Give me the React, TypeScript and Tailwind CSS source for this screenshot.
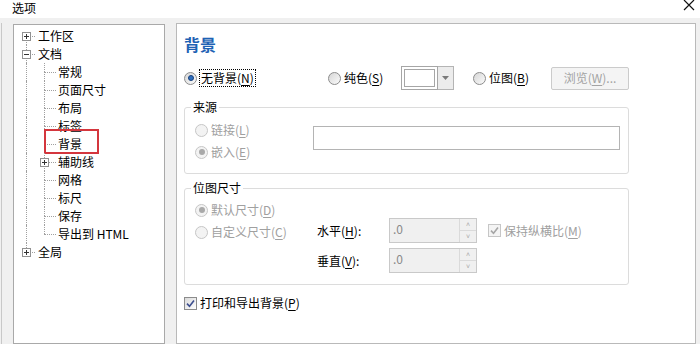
import React from "react";

type Node = {
  label: string;
  level: 0 | 1;
  expander?: "plus" | "minus";
  firstRoot?: boolean;
  lastRoot?: boolean;
  lastChild?: boolean;
  marked?: boolean;
};

const tree: Node[] = [
  { label: "工作区", level: 0, expander: "plus", firstRoot: true },
  { label: "文档", level: 0, expander: "minus" },
  { label: "常规", level: 1 },
  { label: "页面尺寸", level: 1 },
  { label: "布局", level: 1 },
  { label: "标签", level: 1 },
  { label: "背景", level: 1, marked: true },
  { label: "辅助线", level: 1, expander: "plus" },
  { label: "网格", level: 1 },
  { label: "标尺", level: 1 },
  { label: "保存", level: 1 },
  { label: "导出到 HTML", level: 1, lastChild: true },
  { label: "全局", level: 0, expander: "plus", lastRoot: true },
];

function Expander({ kind }: { kind: "plus" | "minus" }) {
  return (
    <span className="absolute left-[5px] top-[5px] flex h-[9px] w-[9px] items-center justify-center border border-[#919191] bg-white">
      <span className="absolute h-px w-[5px] bg-[#333]" />
      {kind === "plus" && <span className="absolute h-[5px] w-px bg-[#333]" />}
    </span>
  );
}

function TreeRow({ node }: { node: Node }) {
  const dots = "border-dotted border-[#a0a0a0]";
  return (
    <div className="relative flex h-[18px] items-center">
      {/* root column */}
      <div className="relative h-[18px] w-[18px] shrink-0">
        {node.level === 0 ? (
          <>
            {!node.firstRoot && <span className={`absolute left-[9px] top-0 h-[9px] border-l ${dots}`} />}
            {!node.lastRoot && <span className={`absolute left-[9px] top-[9px] h-[9px] border-l ${dots}`} />}
            <span className={`absolute left-[9px] top-[9px] w-[9px] border-t ${dots}`} />
            {node.expander && <Expander kind={node.expander} />}
          </>
        ) : (
          <span className={`absolute left-[9px] top-0 h-[18px] border-l ${dots}`} />
        )}
      </div>
      {node.level === 1 && (
        <div className="relative h-[18px] w-[21px] shrink-0">
          <span className={`absolute left-[9px] top-0 h-[9px] border-l ${dots}`} />
          {!node.lastChild && <span className={`absolute left-[9px] top-[9px] h-[9px] border-l ${dots}`} />}
          <span className={`absolute left-[9px] top-[9px] w-[12px] border-t ${dots}`} />
          {node.expander && <Expander kind={node.expander} />}
        </div>
      )}
      <span className={`whitespace-nowrap text-[12px] leading-[18px] text-black ${node.level === 0 ? "ml-[3px]" : "ml-[2px]"}`}>
        {node.label}
      </span>
      {node.marked && (
        <span className="absolute left-[27px] top-[-6px] h-[25px] w-[55px] border-2 border-[#d4363d]" />
      )}
    </div>
  );
}

function Radio({ checked, disabled }: { checked?: boolean; disabled?: boolean }) {
  return (
    <span
      className={`flex h-[13px] w-[13px] shrink-0 items-center justify-center rounded-full border ${
        disabled ? "border-[#c6c6c6] bg-[#f3f3f3]" : "border-[#8c8c8c] bg-gradient-to-br from-[#d6d6d6] to-[#fbfbfb]"
      }`}
    >
      {checked && (
        <span
          className={`h-[6px] w-[6px] rounded-full ${
            disabled ? "bg-[#a9a9a9]" : "border border-[#173f7a] bg-[#2f6fbf]"
          }`}
        />
      )}
    </span>
  );
}

function Check({ disabled }: { disabled?: boolean }) {
  return (
    <span
      className={`flex h-[13px] w-[13px] shrink-0 items-center justify-center border ${
        disabled ? "border-[#c6c6c6] bg-[#f4f4f4]" : "border-[#8c8c8c] bg-gradient-to-br from-[#dadada] to-white"
      }`}
    >
      <svg width="9" height="9" viewBox="0 0 9 9">
        <path
          d="M1 4.6 L3.5 7.2 L8 1.4"
          fill="none"
          stroke={disabled ? "#a6a6a6" : "#3d4f8f"}
          strokeWidth="1.6"
        />
      </svg>
    </span>
  );
}

function Mn({ text, k }: { text: string; k: string }) {
  return (
    <>
      {text}(<span className="underline underline-offset-2">{k}</span>)
    </>
  );
}

function Spin() {
  return (
    <div className="flex h-[25px] w-[88px] border border-[#c9c9c9] bg-[#f0f0f0]">
      <span className="flex-1 pl-[3px] pt-[2px] text-[12px] leading-[16px] text-[#8a8a8a]">.0</span>
      <div className="flex w-[17px] flex-col border-l border-[#dadada]">
        <span className="flex flex-1 items-center justify-center border-b border-[#dadada] text-[7px] leading-none text-[#a8a8a8]">
          ˄
        </span>
        <span className="flex flex-1 items-center justify-center text-[7px] leading-none text-[#a8a8a8]">˅</span>
      </div>
    </div>
  );
}

export default function App() {
  return (
    <div className="flex h-[344px] w-[700px] flex-col overflow-hidden bg-[#f0f0f0] font-['Noto_Sans_CJK_SC',sans-serif] text-[12px] text-black">
      {/* title bar */}
      <div className="flex h-[18px] shrink-0 items-start justify-between bg-white pl-[12px] pr-[5px]">
        <span className="mt-px text-[12px] leading-[14px]">选项</span>
        <svg width="12" height="12" viewBox="0 0 12 12" className="mt-[-1px]">
          <path d="M1 1 L11 11 M11 1 L1 11" stroke="#111" strokeWidth="1.2" />
        </svg>
      </div>

      <div className="flex flex-1 pt-[5px]">
        <div className="ml-px w-[12px] shrink-0 border-l border-[#c8c8c8]" />

        {/* tree */}
        <div className="mt-px w-[152px] shrink-0 border border-[#a9a9a9] bg-white pl-[3px] pt-[2px]">
          {tree.map((n) => (
            <TreeRow key={n.label} node={n} />
          ))}
        </div>

        {/* content panel */}
        <div className="ml-[11px] w-[520px] shrink-0 border border-[#b9b9b9] bg-white pl-[7px] pt-[9px]">
          <div className="text-[16px] font-bold leading-[22px] text-[#1e62b4]">背景</div>

          <div className="mt-[11px] flex h-[24px] items-center">
            <div className="flex w-[144px] items-center">
              <Radio checked />
              <span className="ml-[2px] border border-dotted border-black px-px leading-[16px]">
                <Mn text="无背景" k="N" />
              </span>
            </div>
            <div className="flex w-[73px] items-center">
              <Radio />
              <span className="ml-[3px] leading-[16px]">
                <Mn text="纯色" k="S" />
              </span>
            </div>
            <div className="flex h-[24px] w-[53px]">
              <div className="flex-1 border border-[#a6a6a6] bg-white p-[2px]">
                <div className="h-full w-full border border-[#a6a6a6]" />
              </div>
              <div className="flex w-[16px] items-center justify-center border border-l-0 border-[#b4b4b4] bg-[#ececec]">
                <svg width="7" height="4" viewBox="0 0 7 4">
                  <path d="M0 0 H7 L3.5 4 Z" fill="#7a7a7a" />
                </svg>
              </div>
            </div>
            <div className="ml-[19px] flex w-[78px] items-center">
              <Radio />
              <span className="ml-[3px] leading-[16px]">
                <Mn text="位图" k="B" />
              </span>
            </div>
            <div className="flex h-[23px] w-[78px] items-center justify-center rounded-[2px] border border-[#cbcbcb] bg-[#f4f4f4] text-[#a3a3a3]">
              <Mn text="浏览" k="W" />...
            </div>
          </div>

          <fieldset className="mt-[9px] w-[445px] rounded-[3px] border border-[#dcdcdc] pb-[10px] pl-[10px]">
            <legend className="-ml-[4px] px-[2px] leading-[16px]">来源</legend>
            <div className="flex pt-[4px]">
              <div className="flex w-[118px] flex-col text-[#a0a0a0]">
                <div className="flex h-[22px] items-center gap-[3px]">
                  <Radio disabled />
                  <span>
                    <Mn text="链接" k="L" />
                  </span>
                </div>
                <div className="flex h-[22px] items-center gap-[3px]">
                  <Radio disabled checked />
                  <span>
                    <Mn text="嵌入" k="E" />
                  </span>
                </div>
              </div>
              <div className="mt-[7px] h-[24px] w-[307px] border border-[#b4b4b4] bg-white" />
            </div>
          </fieldset>

          <fieldset className="mt-[6px] w-[445px] rounded-[3px] border border-[#dcdcdc] pb-[11px] pl-[10px]">
            <legend className="-ml-[4px] px-[2px] leading-[16px]">位图尺寸</legend>
            <div className="flex">
              <div className="flex w-[122px] flex-col pt-[3px] text-[#a0a0a0]">
                <div className="flex h-[22px] items-center gap-[3px]">
                  <Radio disabled checked />
                  <span>
                    <Mn text="默认尺寸" k="D" />
                  </span>
                </div>
                <div className="flex h-[22px] items-center gap-[3px]">
                  <Radio disabled />
                  <span>
                    <Mn text="自定义尺寸" k="C" />
                  </span>
                </div>
              </div>
              <div className="flex flex-col gap-[5px] pt-[22px]">
                <div className="flex h-[25px] items-center">
                  <span className="w-[72px]">
                    <Mn text="水平" k="H" />:
                  </span>
                  <Spin />
                  <div className="ml-[11px] flex items-center gap-[3px] text-[#a0a0a0]">
                    <Check disabled />
                    <span>
                      <Mn text="保持纵横比" k="M" />
                    </span>
                  </div>
                </div>
                <div className="flex h-[25px] items-center">
                  <span className="w-[72px]">
                    <Mn text="垂直" k="V" />:
                  </span>
                  <Spin />
                </div>
              </div>
            </div>
          </fieldset>

          <div className="mt-[9px] flex h-[18px] items-center gap-[3px]">
            <Check />
            <span>
              <Mn text="打印和导出背景" k="P" />
            </span>
          </div>
        </div>
      </div>
    </div>
  );
}
